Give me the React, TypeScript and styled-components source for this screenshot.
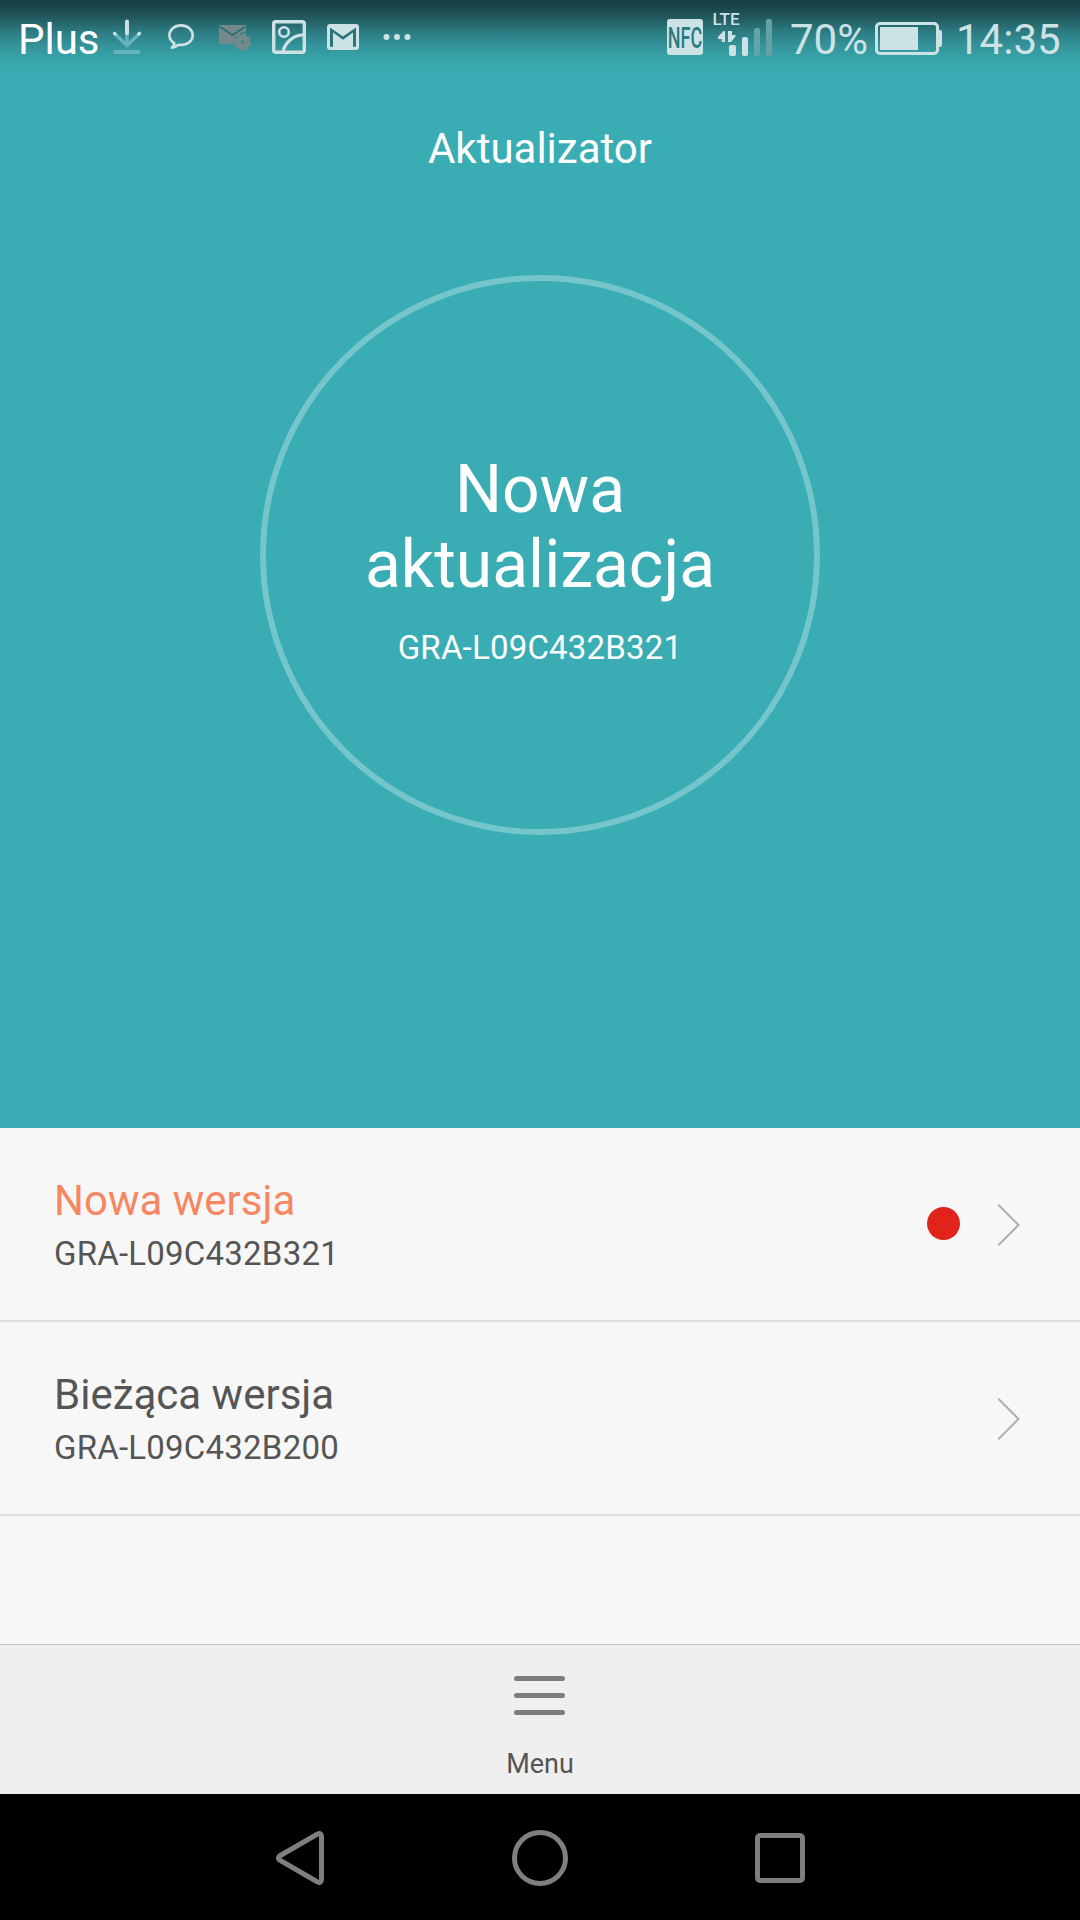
import React from "react";
import styled, { createGlobalStyle } from "styled-components";

const teal = "#3aadb4";
const glyph = "#cde2e4";
const dim = "#64b3b8";

const GlobalStyle = createGlobalStyle`
  *, *::before, *::after { box-sizing: border-box; }
  html, body { margin: 0; padding: 0; }
  body {
    background: #000;
    font-family: Roboto, "Noto Sans", "Liberation Sans", sans-serif;
  }
`;

const Screen = styled.div`
  display: flex;
  flex-direction: column;
  width: 1080px;
  height: 1920px;
  overflow: hidden;
  background: #f7f7f7;
`;

const Hero = styled.header`
  display: flex;
  flex-direction: column;
  align-items: center;
  flex: none;
  height: 1128px;
  background: ${teal};
  color: #fff;
`;

const StatusBar = styled.div`
  display: flex;
  justify-content: space-between;
  align-self: stretch;
  flex: none;
  height: 84px;
  padding: 0 18px;
  background: linear-gradient(
    #173f43 0,
    #1b484d 9px,
    #235f64 20px,
    #2c7c82 32px,
    #33949a 46px,
    #38a5ac 60px,
    ${teal} 80px
  );
`;

const StatusGroup = styled.div`
  display: flex;
  align-items: flex-start;
`;

const StatusText = styled.span<{ $color?: string; $width: number; $indent?: number }>`
  width: ${(p) => p.$width}px;
  margin-top: 15px;
  padding-left: ${(p) => p.$indent ?? 0}px;
  font-size: 42px;
  line-height: 50px;
  white-space: nowrap;
  color: ${(p) => p.$color ?? glyph};
`;

const StatusIcon = styled.svg`
  display: block;
  flex: none;
`;

const Title = styled.h1`
  margin: 40px 0 0;
  font-size: 42px;
  font-weight: 400;
  line-height: 50px;
`;

const Ring = styled.div`
  display: flex;
  flex-direction: column;
  align-items: center;
  width: 560px;
  height: 560px;
  margin-top: 101px;
  padding-top: 171px;
  border: 6px solid #75c6ca;
  border-radius: 50%;
  text-align: center;
`;

const RingTitle = styled.div`
  width: 400px;
  font-size: 66px;
  line-height: 75px;
`;

const RingVersion = styled.div`
  margin-top: 26px;
  font-size: 33px;
  line-height: 39px;
  letter-spacing: 0.2px;
`;

const List = styled.ul`
  flex: 1;
  margin: 0;
  padding: 0;
  list-style: none;
`;

const Row = styled.li`
  display: flex;
  align-items: center;
  height: 194px;
  padding: 0 60px 0 54px;
  border-bottom: 2px solid #e0e0e0;
`;

const RowText = styled.div`
  display: flex;
  flex-direction: column;
  flex: 1;
  padding-top: 5px;
`;

const RowTitle = styled.span<{ $accent?: boolean }>`
  font-size: 42px;
  line-height: 54px;
  color: ${(p) => (p.$accent ? "#f68762" : "#555")};
`;

const RowVersion = styled.span`
  font-size: 33px;
  line-height: 52px;
  letter-spacing: 0.22px;
  color: #555;
`;

const Dot = styled.span`
  width: 33px;
  height: 33px;
  margin: 0 37px 2px 0;
  border-radius: 50%;
  background: #e0241b;
`;

const Chevron = styled.svg`
  display: block;
  margin-top: 2px;
`;

const MenuBar = styled.button`
  display: flex;
  flex-direction: column;
  align-items: center;
  flex: none;
  height: 150px;
  margin: 0;
  padding: 31px 0 0;
  border: 0;
  border-top: 1px solid #c0c0c0;
  background: #efefef;
  font-family: inherit;
  color: #555;
`;

const Burger = styled.span`
  display: flex;
  flex-direction: column;
  gap: 12px;
  width: 51px;
  margin-right: 1px;
`;

const BurgerLine = styled.span`
  height: 5px;
  border-radius: 3px;
  background: #7c7c7c;
`;

const MenuLabel = styled.span`
  margin-top: 33px;
  font-size: 27px;
  line-height: 32px;
`;

const NavBar = styled.nav`
  display: flex;
  align-items: center;
  justify-content: center;
  gap: 180px;
  flex: none;
  height: 126px;
  padding-top: 2px;
  background: #000;
`;

const NavIcon = styled.svg`
  display: block;
  fill: none;
  stroke: #7f7f7f;
  stroke-width: 5;
`;

type GlyphProps = { x: number; w: number; children: React.ReactNode };

/* Status glyphs share the coordinate space of the bar; x is the left edge of each slice. */
const Glyph = ({ x, w, children }: GlyphProps) => (
  <StatusIcon width={w} height={75} viewBox={`${x} 0 ${w} 75`}>
    {children}
  </StatusIcon>
);

const GoChevron = () => (
  <Chevron width={23} height={44} viewBox="0 0 23 44" fill="none" stroke="#b0b0b0" strokeWidth={2}>
    <path d="M1.300 1.700 21.500 22 1.300 42.300" />
  </Chevron>
);

const versions = [
  { title: "Nowa wersja", version: "GRA-L09C432B321", fresh: true },
  { title: "Bieżąca wersja", version: "GRA-L09C432B200", fresh: false },
];

export default function App() {
  return (
    <>
      <GlobalStyle />
      <Screen>
        <Hero>
          <StatusBar>
            <StatusGroup>
              <StatusText $color="#fff" $width={88}>Plus</StatusText>
              <Glyph x={106} w={50}>
                <path d="M127 33V45M114.500 33.500 127 45.500 139.500 33.500" stroke={dim} strokeWidth={3.600} strokeLinecap="round" fill="none" />
                <path d="M127 21.500V33" stroke={glyph} strokeWidth={4} strokeLinecap="round" />
                <path d="M114.500 33.300l.8.700M139.500 33.300l-.8.700" stroke={glyph} strokeWidth={3} strokeLinecap="round" />
                <path d="M115 52H138.500" stroke={dim} strokeWidth={4} strokeLinecap="round" />
              </Glyph>
              <Glyph x={156} w={50}>
                <path
                  d="M174.500 43.300C171.300 41.500 169.400 38.600 169.400 35.300 169.400 29.700 174.500 25.400 181 25.400S192.700 29.700 192.700 35.300 187.500 45 181 45C180 45 179.300 44.900 178.400 44.700 176.700 46.500 174.500 47.500 172 47.600 173.600 46.300 174.300 45 174.500 43.300Z"
                  fill="none"
                  stroke={glyph}
                  strokeWidth={2.600}
                  strokeLinejoin="round"
                />
              </Glyph>
              <Glyph x={206} w={55}>
                <path d="M219 25H246V32.500A10 10 0 0 0 234 44H219Z" fill="#75898b" />
                <path d="M219.500 26.500 232.500 35 245.500 26.500" fill="none" stroke="#276e74" strokeWidth={1.600} />
                <circle cx={242.500} cy={42} r={4.600} fill="none" stroke="#75898b" strokeWidth={5.600} />
                <circle cx={242.500} cy={42} r={7.600} fill="none" stroke="#75898b" strokeWidth={2.400} strokeDasharray="3.4 2.570" />
              </Glyph>
              <Glyph x={261} w={56}>
                <rect x={273.700} y={21.700} width={30.600} height={30.600} rx={2} fill="none" stroke={glyph} strokeWidth={3.400} />
                <circle cx={284} cy={32} r={4.800} fill="none" stroke={glyph} strokeWidth={2.600} />
                <path d="M283 52C284.500 43 293.500 34.500 304 35" fill="none" stroke={glyph} strokeWidth={3.200} />
              </Glyph>
              <Glyph x={317} w={53}>
                <path
                  d="M330 24H356Q359 24 359 27V47Q359 50 356 50H330Q327 50 327 47V27Q327 24 330 24Z"
                  fill={glyph}
                />
                <path d="M330 27.500 343 36.500 356 27.500V46.700H353V32.500L343 39.800 333 32.500V46.700H330Z" fill="#297379" />
                <path d="M332 26.600H354L343 33.500Z" fill={glyph} />
              </Glyph>
              <Glyph x={370} w={50}>
                <circle cx={386.500} cy={37} r={3} fill={glyph} />
                <circle cx={397} cy={37} r={3} fill={glyph} />
                <circle cx={407.500} cy={37} r={3} fill={glyph} />
              </Glyph>
            </StatusGroup>
            <StatusGroup>
              <Glyph x={660} w={50}>
                <rect x={667} y={19} width={36} height={36} rx={3} fill={glyph} />
                <text transform="translate(667.800 48) scale(.6 1)" fontSize={30} fontWeight={500} fill="#2a7c83">NFC</text>
              </Glyph>
              <Glyph x={710} w={79}>
                <text x={712.500} y={25} fontSize={17} fontWeight={500} fill={glyph}>LTE</text>
                <path d="M725 31H723.500L718 37V39H721.800V42H725ZM728 31H732V35H735.500V36.500L731 42H728Z" fill={glyph} />
                <rect x={729} y={45} width={7} height={11} rx={2} fill={glyph} />
                <rect x={742} y={37} width={6} height={19} rx={2} fill={glyph} />
                <rect x={754} y={28} width={6} height={28} rx={2} fill="#64a5aa" />
                <rect x={766} y={19} width={6} height={37} rx={2} fill="#66a0a5" />
              </Glyph>
              <StatusText $width={80} $indent={1}>70%</StatusText>
              <Glyph x={869} w={86}>
                <rect x={876.500} y={23.500} width={61} height={30} rx={3.500} fill="none" stroke={glyph} strokeWidth={3} />
                <rect x={880} y={27} width={38} height={23} fill={glyph} />
                <path d="M938 30H940Q942 30 942 32V45Q942 47 940 47H938Z" fill={glyph} />
              </Glyph>
              <StatusText $width={107} $indent={1}>14:35</StatusText>
            </StatusGroup>
          </StatusBar>
          <Title>Aktualizator</Title>
          <Ring>
            <RingTitle>Nowa aktualizacja</RingTitle>
            <RingVersion>GRA-L09C432B321</RingVersion>
          </Ring>
        </Hero>
        <List>
          {versions.map((v) => (
            <Row key={v.version}>
              <RowText>
                <RowTitle $accent={v.fresh}>{v.title}</RowTitle>
                <RowVersion>{v.version}</RowVersion>
              </RowText>
              {v.fresh && <Dot />}
              <GoChevron />
            </Row>
          ))}
        </List>
        <MenuBar>
          <Burger>
            <BurgerLine />
            <BurgerLine />
            <BurgerLine />
          </Burger>
          <MenuLabel>Menu</MenuLabel>
        </MenuBar>
        <NavBar>
          <NavIcon width={60} height={60} viewBox="270 1828 60 60">
            <path d="M279.500 1856 317.500 1834Q321.500 1832.500 321.500 1836.500V1879.500Q321.500 1883.500 317.500 1882L279.500 1860Q277.500 1858 279.500 1856Z" />
          </NavIcon>
          <NavIcon width={60} height={60} viewBox="510 1828 60 60">
            <circle cx={540} cy={1858} r={25.500} />
          </NavIcon>
          <NavIcon width={60} height={60} viewBox="750 1828 60 60">
            <rect x={757.500} y={1835.500} width={45} height={45} rx={2.500} />
          </NavIcon>
        </NavBar>
      </Screen>
    </>
  );
}
